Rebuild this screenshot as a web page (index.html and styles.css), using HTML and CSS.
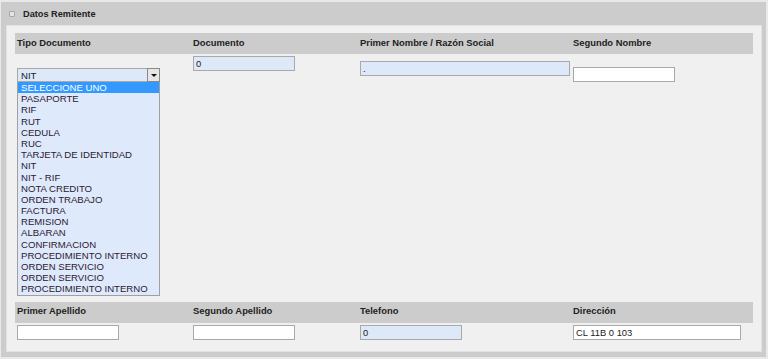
FILE: index.html
```html
<!DOCTYPE html>
<html lang="es">
<head>
 <meta charset="UTF-8">
 <title>Datos Remitente</title>
 <link rel="stylesheet" href="styles.css">
</head>
<body>
 <div class="panel">
  <div class="panel-head"><span class="toggle"></span>Datos Remitente</div>
  <div class="panel-body">
   <div class="row labels">
    <div>Tipo Documento</div>
    <div>Documento</div>
    <div>Primer Nombre / Razón Social</div>
    <div>Segundo Nombre</div>
   </div>
   <div class="row fields first">
    <div class="tipo">
     <div class="select"><span>NIT</span><span class="arrow"></span></div>
     <ul class="options">
      <li class="active">SELECCIONE UNO</li>
      <li>PASAPORTE</li>
      <li>RIF</li>
      <li>RUT</li>
      <li>CEDULA</li>
      <li>RUC</li>
      <li>TARJETA DE IDENTIDAD</li>
      <li>NIT</li>
      <li>NIT - RIF</li>
      <li>NOTA CREDITO</li>
      <li>ORDEN TRABAJO</li>
      <li>FACTURA</li>
      <li>REMISION</li>
      <li>ALBARAN</li>
      <li>CONFIRMACION</li>
      <li>PROCEDIMIENTO INTERNO</li>
      <li>ORDEN SERVICIO</li>
      <li>ORDEN SERVICIO</li>
      <li>PROCEDIMIENTO INTERNO</li>
     </ul>
    </div>
    <div class="doc"><input class="field blue short" value="0"></div>
    <div class="nombre"><input class="field blue wide" value="."></div>
    <div class="nombre2"><input class="field short" value=""></div>
   </div>
   <div class="row labels">
    <div>Primer Apellido</div>
    <div>Segundo Apellido</div>
    <div>Telefono</div>
    <div>Dirección</div>
   </div>
   <div class="row fields">
    <div><input class="field short" value=""></div>
    <div><input class="field short" value=""></div>
    <div><input class="field blue short" value="0"></div>
    <div><input class="field addr" value="CL 11B 0 103"></div>
   </div>
  </div>
 </div>
</body>
</html>
```

FILE: styles.css
```css
body {
 margin: 0;
 background: #e9e9e9;
 font-family: "Liberation Sans", Arial, sans-serif;
 color: #222;
}
.panel {
 margin: 2px 2px 2px 1px;
 background: #cccccc;
 padding: 0 4px 5px 5px;
}
.panel-head {
 height: 23px;
 display: flex;
 align-items: center;
 font-size: 9.2px;
 font-weight: bold;
 color: #222;
 padding-left: 3px;
}
.toggle {
 width: 4px;
 height: 4px;
 border: 1px solid #a8a8a8;
 border-radius: 1px;
 background: #e4e4e4;
 margin-right: 8px;
}
.panel-body {
 background: #f0f0f0;
 border: 1px solid #e2e2e2;
 padding: 7px 8px 11px 8px;
}
.row {
 display: grid;
 grid-template-columns: 176px 167px 213px 1fr;
 padding-left: 2px;
 align-items: start;
}
.labels {
 background: #cccccc;
 height: 21px;
 align-items: center;
 font-size: 9.4px;
 font-weight: bold;
 color: #222;
 padding-bottom: 3px;
 box-sizing: border-box;
}
.fields {
 padding-top: 2px;
}
.fields.first {
 padding-top: 0;
 padding-bottom: 6px;
}
.doc { margin-top: 2px; }
.nombre { margin-top: 7px; }
.nombre2 { margin-top: 13px; }
.tipo { margin-top: 14px; }
.field {
 display: block;
 box-sizing: border-box;
 height: 15px;
 margin: 0;
 padding: 0 2px;
 border: 1px solid #a9a9a9;
 background: #fff;
 font-family: "Liberation Sans", Arial, sans-serif;
 font-size: 9.4px;
 color: #222;
 outline: none;
}
.field.blue { background: #dde8f8; }
.short { width: 102px; }
.wide { width: 210px; }
.addr { width: 168px; }
.select {
 box-sizing: border-box;
 width: 143px;
 height: 14px;
 border: 1px solid #a9a9a9;
 background: #dde8f8;
 display: flex;
 justify-content: space-between;
 align-items: center;
 font-size: 9.6px;
 padding-left: 3px;
}
.arrow {
 box-sizing: border-box;
 width: 13px;
 height: 14px;
 margin: -1px -1px -1px 0;
 border: 1px solid #8a8a8a;
 background: #e6e6e6;
 display: flex;
 justify-content: center;
 align-items: center;
}
.arrow::after {
 content: "";
 border-left: 3px solid transparent;
 border-right: 3px solid transparent;
 border-top: 3px solid #111;
}
.options {
 list-style: none;
 margin: 0;
 padding: 0;
 width: 143px;
 box-sizing: border-box;
 border: 1px solid #a0a0a0;
 border-top: none;
 background: #dfe9fc;
 font-size: 9.6px;
 color: #2a2030;
}
.options li {
 height: 11.2px;
 line-height: 11.2px;
 padding-left: 3px;
 white-space: nowrap;
}
.options .active {
 background: #3399ff;
 color: #fff;
}
```
